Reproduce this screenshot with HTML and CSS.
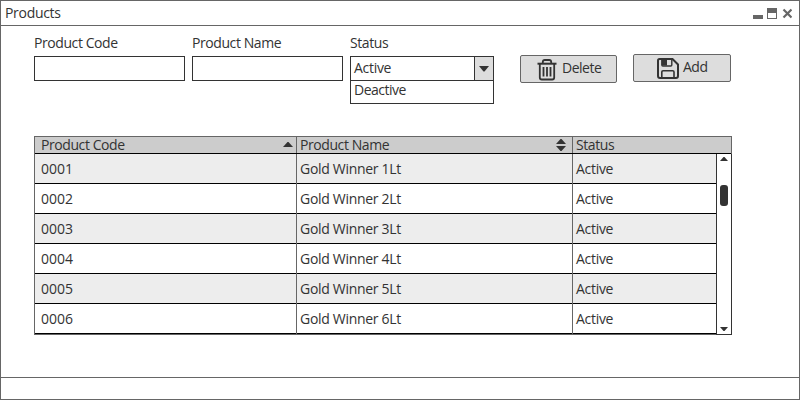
FILE: index.html
```html
<!DOCTYPE html>
<html lang="en">
<head>
<meta charset="utf-8">
<title>Products</title>
<link rel="stylesheet" href="styles.css">
</head>
<body>
<div class="window">
  <header class="titlebar">
    <span class="title">Products</span>
    <svg class="controls" width="39" height="11" viewBox="0 0 39 11" shape-rendering="crispEdges">
      <path d="M0 7h10v4H0zM14 0h10v11H14z" fill="#666"/>
      <path d="M15 5h8v5h-8z" fill="#fff"/>
      <path d="M30.500 1.500l8 8M38.500 1.500l-8 8" stroke="#666" stroke-width="2.200" fill="none" shape-rendering="auto"/>
    </svg>
  </header>
  <main class="content">
    <div class="filters">
      <div class="field"><label>Product Code</label><div class="input"></div></div>
      <div class="field"><label>Product Name</label><div class="input"></div></div>
      <div class="field status"><label>Status</label>
        <div class="combo"><span>Active</span><div class="arrow"><svg width="10" height="6" viewBox="0 0 10 6"><path d="M0 0h10L5.500 5.500h-1z" fill="#333"/></svg></div></div>
        <div class="option">Deactive</div>
      </div>
      <button class="btn delete">
        <svg width="20" height="22" viewBox="0 0 20 22" fill="none" stroke="#333" stroke-width="1.800">
          <path d="M0.500 4.700h19" stroke-width="2"/>
          <path d="M5.800 4V3Q5.800 1 7.800 1h4.400q2 0 2 2v1M2.800 5v13.500q0 2 2 2h10.400q2 0 2-2V5"/>
          <path d="M6.500 8v9.500M10 8v9.500M13.500 8v9.500"/>
        </svg><span>Delete</span>
      </button>
      <button class="btn add">
        <svg width="22" height="21" viewBox="0 0 22 21" fill="none" stroke="#333" stroke-width="2">
          <path d="M2.500 1h13L21 6.500V18q0 2-2 2H3q-2 0-2-2V2.500Q1 1 2.500 1z"/>
          <path d="M4.800 1v6q0 1 1 1h8q1 0 1-1V1" stroke-width="1.400"/>
          <path d="M5 1h5v6.500H5z" fill="#333" stroke="none"/>
          <path d="M4.800 20v-6q0-1.300 1.300-1.300h9.600q1.300 0 1.300 1.300v6" stroke-width="1.600"/>
        </svg><span>Add</span>
      </button>
    </div>
    <section class="grid">
      <div class="row head">
        <div>Product Code<svg width="10" height="6" viewBox="0 0 10 6"><path d="M4.500 0h1L10 5H0z" fill="#333"/></svg></div>
        <div>Product Name<svg width="10" height="12" viewBox="0 0 10 12"><path d="M4.500 0h1L10 5H0zM0 7h10L5.500 12h-1z" fill="#333"/></svg></div>
        <div>Status</div>
      </div>
      <div class="body">
        <div class="rows">
          <div class="row"><div>0001</div><div>Gold Winner 1Lt</div><div>Active</div></div>
          <div class="row"><div>0002</div><div>Gold Winner 2Lt</div><div>Active</div></div>
          <div class="row"><div>0003</div><div>Gold Winner 3Lt</div><div>Active</div></div>
          <div class="row"><div>0004</div><div>Gold Winner 4Lt</div><div>Active</div></div>
          <div class="row"><div>0005</div><div>Gold Winner 5Lt</div><div>Active</div></div>
          <div class="row"><div>0006</div><div>Gold Winner 6Lt</div><div>Active</div></div>
        </div>
        <div class="scrollbar">
          <svg width="8" height="4" viewBox="0 0 8 4"><path d="M3.500 0h1L8 4H0z" fill="#333"/></svg>
          <div class="thumb"></div>
          <svg class="down" width="8" height="4" viewBox="0 0 8 4"><path d="M0 0h8L4.500 4h-1z" fill="#333"/></svg>
        </div>
      </div>
    </section>
  </main>
  <footer class="statusbar"></footer>
</div>
</body>
</html>
```
FILE: styles.css
```css
* { box-sizing: border-box; }
body {
  margin: 0;
  background: #fff;
  color: #333;
  font: 14px/20px "Open Sans", "Noto Sans", sans-serif;
  letter-spacing: -0.3px;
}
svg { display: block; flex: none; }
.window {
  width: 800px;
  height: 400px;
  border: 1px solid #666;
  display: flex;
  flex-direction: column;
}
.titlebar {
  height: 25px;
  flex: none;
  border-bottom: 1px solid #666;
  padding: 0 7px 0 4px;
  display: flex;
  align-items: center;
  justify-content: space-between;
}
.content { flex: 1; padding: 8px 0 0 33px; }
.statusbar { height: 22px; flex: none; border-top: 1px solid #666; }
.filters { display: flex; height: 102px; }
.field { width: 151px; margin-right: 7px; }
.field label { display: block; height: 22px; line-height: 17px; letter-spacing: -0.42px; }
.input { height: 25px; border: 1px solid #333; }
.status { width: 144px; margin-right: 26px; }
.status label { letter-spacing: -0.4px; }
.combo {
  display: flex;
  height: 25px;
  border: 1px solid #333;
  justify-content: space-between;
}
.combo span { padding-left: 3px; line-height: 21px; }
.arrow {
  width: 19px;
  background: #ddd;
  border-left: 1px solid #333;
  display: flex;
  align-items: center;
  justify-content: center;
}
.option {
  height: 23px;
  border: 1px solid #333;
  border-top: 0;
  padding-left: 3px;
  line-height: 18px;
  letter-spacing: -0.5px;
}
.btn {
  display: flex;
  border: 1px solid #666;
  border-radius: 2px;
  background: #ddd;
  color: #333;
  font: inherit;
  letter-spacing: -0.5px;
  height: 28px;
}
.btn span { line-height: 20px; }
.delete { width: 97px; margin: 21px 16px 0 0; padding: 3px 0 0 16px; gap: 5px; }
.delete span { margin-top: -1px; }
.add { width: 98px; margin-top: 20px; padding: 3px 0 0 23px; gap: 4px; }
.add span { margin-top: -1px; }
.grid { width: 698px; height: 199px; border: 1px solid #666; }
.row { display: grid; grid-template-columns: 261px 276px 1fr; height: 30px; line-height: 30px; }
.row > div { padding-left: 3px; box-shadow: inset 0 -1px #000; }
.row > div:first-child { padding-left: 6px; }
.rows .row > div:first-child { letter-spacing: 0; }
.row > div + div { border-left: 1px solid #666; }
.row:nth-child(odd) { background: #ededed; }
.row.head { height: 16px; line-height: 16px; background: #ccc; box-shadow: 0 1px #000; letter-spacing: -0.42px; }
.head > div { display: flex; justify-content: space-between; align-items: center; padding-right: 3px; box-shadow: none; }
.head > div:nth-child(2) { padding-right: 6px; }
.body { display: flex; margin-top: 1px; }
.rows { width: 681px; }
.scrollbar {
  width: 16px;
  height: 181px;
  margin-right: -1px;
  border: solid #333;
  border-width: 0 1px 1px;
  padding: 3px 0;
  display: flex;
  flex-direction: column;
  align-items: center;
}
.thumb { width: 8px; height: 21px; margin-top: 24px; border-radius: 3px; background: #333; }
.down { margin-top: auto; }
```
